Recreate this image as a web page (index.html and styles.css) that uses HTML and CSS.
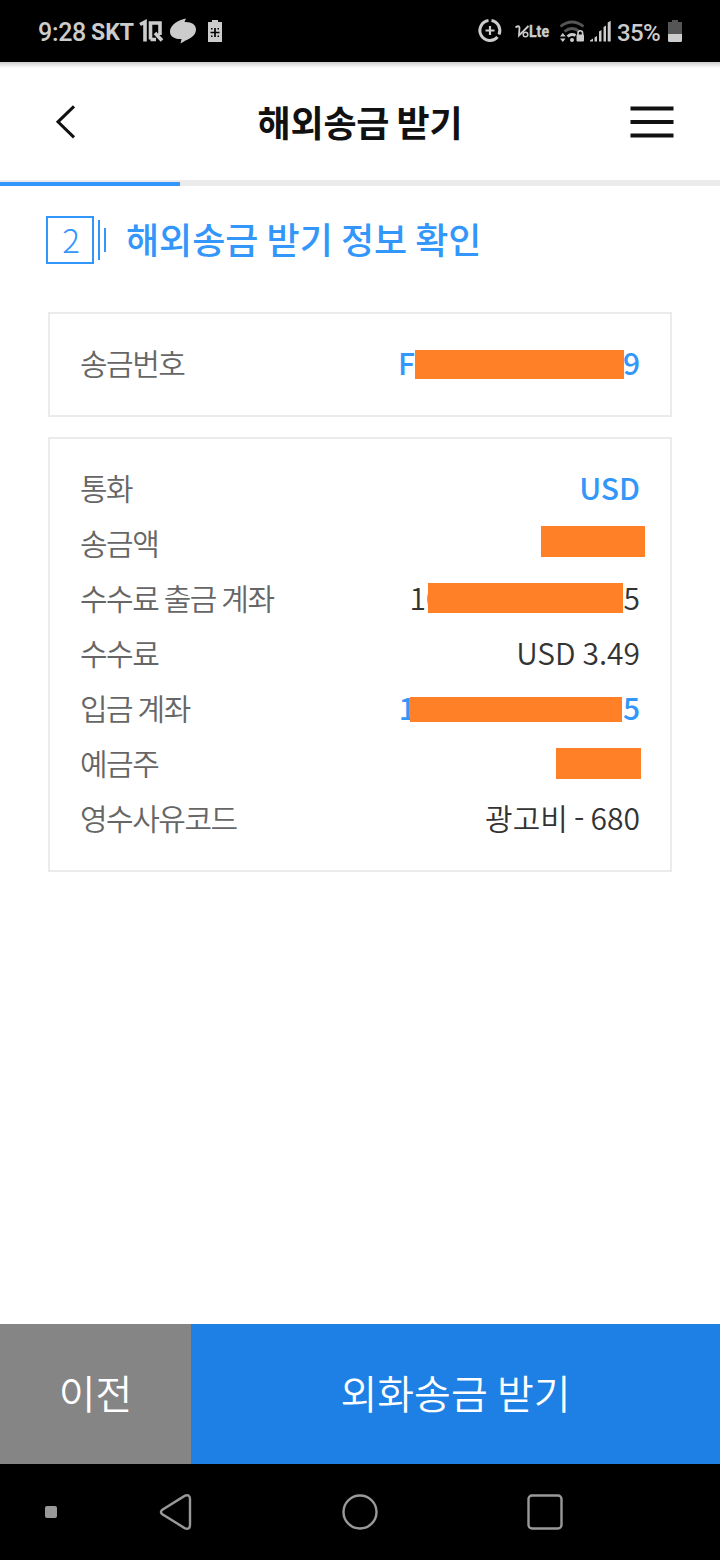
FILE: index.html
```html
<!DOCTYPE html>
<html lang="ko">
<head>
<meta charset="utf-8">
<title>해외송금 받기</title>
<link rel="stylesheet" href="styles.css">
</head>
<body>
<div class="screen">
  <div class="status">
    <span class="clock">9:28</span>
    <span class="carrier">SKT</span>
    <svg class="st-left" width="90" height="62" viewBox="138 0 90 62">
      <path d="M140 24.500L145 22V41.500M150.500 39.500V23H160V35M150.500 39.500H156M155 33L162 40.500" fill="none" stroke="#ccc" stroke-width="3.600"/>
      <path d="M186 18.500L184.500 22C191 21.500 196.500 24.500 196 30C195.500 35.500 190.500 38.500 185.500 40.500L180.500 43.500L181.500 39C175 39.500 169.500 36.500 170 31C170.500 25 178 20 186 18.500Z" fill="#ccc"/>
      <path d="M208 22h4v-2h6v2h4v20h-14z" fill="#ccc"/>
      <path d="M215 28v9M210.500 32.500h9" stroke="#000" stroke-width="1.700"/>
      <path d="M211 28h1.500v1.500H211zM217.500 28h1.500v1.500h-1.500zM211 35.500h1.500V37H211zM217.500 35.500h1.500V37h-1.500z" fill="#000"/>
    </svg>
    <svg class="st-right" width="136" height="62" viewBox="476 0 136 62">
      <g fill="none" stroke="#ccc" stroke-width="3">
        <path d="M491.500 20.600A10 10 0 0 1 499 34.500M497.500 37A10 10 0 1 1 488.500 20.600"/>
        <path d="M490 26v9M485.500 30.500h9" stroke-width="2.200"/>
      </g>
      <path d="M515.500 27.500q3.500-2.500 4 0l-.5 8L528.500 26" fill="none" stroke="#ccc" stroke-width="1.800"/>
      <circle cx="525.500" cy="34.500" r="2.300" fill="none" stroke="#ccc" stroke-width="1.500"/>
      <text class="volte" x="529" y="37" textLength="20" lengthAdjust="spacingAndGlyphs">Lte</text>
      <g fill="none" stroke-width="2.800">
        <path d="M560.500 26.500Q572 17.500 583.500 26.500" stroke="#555"/>
        <path d="M564.500 31.500Q572 25.500 579.500 31.500" stroke="#555"/>
        <path d="M567.500 36.500Q571.500 33 575.500 35.500" stroke="#ccc"/>
      </g>
      <circle cx="572" cy="40" r="2" fill="#ccc"/>
      <path d="M560 36.500l2.800-3.500L565.600 36.500zM560 38.500h5.600L562.800 42z" fill="#ccc"/>
      <rect x="576.500" y="34.500" width="7.500" height="7" rx="1" fill="#ccc"/>
      <path d="M578 35.500v-2.500a2.300 2.300 0 0 1 4.600 0v2.500" fill="none" stroke="#ccc" stroke-width="1.600"/>
      <path d="M590 41.500v-1l3-2v3zM594.500 37.500l2.500-1.500v5.500h-2.500zM599 31.500l2.500-1.500v11.500H599zM603.500 27l2.500-1.500v16h-2.500zM607.700 22.500l3-1.700v20.700h-3z" fill="#ccc"/>
    </svg>
    <span class="pct">35%</span>
    <svg class="batt" width="14" height="62" viewBox="668 0 14 62">
      <path d="M668 22h4v-2h6v2h4v12h-14z" fill="#555"/>
      <path d="M668 34h14v6.500q0 1.500-1.500 1.500h-11q-1.500 0-1.500-1.500z" fill="#ccc"/>
    </svg>
  </div>

  <header class="header">
    <svg width="22" height="36" viewBox="0 0 22 36"><path d="M19 2.300L3 17.800L19 33.300" fill="none" stroke="#111" stroke-width="3"/></svg>
    <h1>해외송금 받기</h1>
    <svg width="44" height="34" viewBox="0 0 44 34"><path d="M.5 3.500h43M.5 17h43M.5 30.500h43" stroke="#111" stroke-width="3.800"/></svg>
  </header>
  <div class="progress"><div class="done"></div></div>

  <main>
    <div class="step">
      <span class="num">2</span><i class="bar tall"></i><i class="bar"></i>
      <h2>해외송금 받기 정보 확인</h2>
    </div>
    <section class="card">
      <div class="row"><span>송금번호</span><b>F<i class="mask m-no"></i>9</b></div>
    </section>
    <section class="card">
      <div class="row"><span>통화</span><b>USD</b></div>
      <div class="row"><span>송금액</span><i class="mask m-amt"></i></div>
      <div class="row"><span>수수료 출금 계좌</span><em>10<i class="mask m-fee"></i>5</em></div>
      <div class="row"><span>수수료</span><em>USD 3.49</em></div>
      <div class="row"><span>입금 계좌</span><b>1<i class="mask m-acc"></i>5</b></div>
      <div class="row"><span>예금주</span><i class="mask m-own"></i></div>
      <div class="row"><span>영수사유코드</span><em class="code">광고비 - 680</em></div>
    </section>
  </main>

  <footer class="actions"><button class="prev">이전</button><button class="next">외화송금 받기</button></footer>
  <nav class="nav">
    <i class="dot"></i>
    <svg class="back" width="34" height="38" viewBox="0 0 34 38"><path d="M3 17Q1 19 3 21L26 35.300Q31 37 31 32V6Q31 1 26 2.700Z" fill="none" stroke="#999" stroke-width="2.400"/></svg>
    <svg class="home" width="38" height="38" viewBox="0 0 38 38"><circle cx="19" cy="19" r="16.500" fill="none" stroke="#999" stroke-width="2.400"/></svg>
    <svg class="recent" width="38" height="38" viewBox="0 0 38 38"><rect x="2.500" y="2.500" width="33" height="33" rx="3.500" fill="none" stroke="#999" stroke-width="2.400"/></svg>
  </nav>
</div>
</body>
</html>
```
FILE: styles.css
```css
* { box-sizing: border-box; }
body { margin: 0; font-family: "Noto Sans CJK KR", sans-serif; background: #fff; }
h1, h2 { margin: 0; font-size: 36px; line-height: 48px; white-space: nowrap; }
i, em { font-style: normal; }
svg { display: block; flex: none; }
.screen { width: 720px; height: 1560px; display: flex; flex-direction: column; overflow: hidden; }

.status { height: 62px; flex: none; background: #000; color: #ccc; display: flex; align-items: center; padding-left: 38px; font-family: Roboto, sans-serif; line-height: 62px; white-space: nowrap; }
.clock { width: 53px; font-size: 25px; font-weight: 500; letter-spacing: -.3px; padding-top: 3px; }
.carrier { width: 47px; font-size: 23px; font-weight: 700; padding-top: 3px; }
.st-right { margin-left: 248px; }
.pct { width: 51px; margin-left: 5px; font-size: 24px; font-weight: 500; letter-spacing: -.6px; padding-top: 3px; }
.volte { font: 700 17px Roboto, sans-serif; fill: #ccc; stroke: #ccc; stroke-width: .4px; }

.header { height: 118px; flex: none; display: flex; align-items: center; justify-content: space-between; padding: 2px 46px 0 55px; background: linear-gradient(#ccc, #fff 6px); }
.header h1 { color: #111; font-weight: 700; word-spacing: -2.5px; margin: -3px 0 0 13px; letter-spacing: -.2px; }
.progress { height: 6px; flex: none; background: #ebebeb; padding-top: 2px; }
.done { width: 25%; height: 4px; background: #3296fa; }

main { flex: 1; padding: 30px 48px 0; }
.step { display: flex; align-items: center; height: 48px; margin: 0 0 48px -2px; color: #3296fa; }
.num { width: 48px; height: 48px; border: 2px solid; font-size: 33px; font-weight: 300; line-height: 42px; text-align: center; padding-left: 2px; }
.bar { width: 2px; height: 24px; margin-left: 4px; background: #3296fa; }
.bar.tall { height: 40px; }
.step h2 { margin: -5px 0 0 20px; font-weight: 500; word-spacing: -2px; }

.card { border: 2px solid #ebebeb; padding: 22px 30px 24px; margin-bottom: 20px; }
.row { height: 55px; display: flex; align-items: center; justify-content: space-between; font-size: 30px; line-height: 53px; white-space: nowrap; }
.row span { color: #666; font-weight: 350; letter-spacing: -1.5px; word-spacing: -1.5px; margin-top: -2px; }
.row b, .row em { display: flex; align-items: center; margin-top: -2px; }
.row b { color: #3296fa; font-weight: 500; }
.row em { color: #333; font-weight: 350; word-spacing: -1.5px; }
.row .code { word-spacing: -2.2px; }
.mask { display: block; flex: none; background: #ff8027; z-index: 1; }
.m-no { width: 209px; height: 29px; margin: 3px -1px 0 0; }
.m-amt { width: 104px; height: 31px; margin: 0 -5px 5px 0; }
.m-fee { width: 195px; height: 30px; margin-left: -15px; margin-right: 1px; }
.m-acc { width: 212px; height: 25px; margin: 4px 1px 0 -6px; }
.m-own { width: 85px; height: 31px; margin-right: -1px; }

.actions { height: 140px; flex: none; display: flex; }
.actions button { border: 0; padding: 0 0 4px; color: #fff; font: 350 40px/136px "Noto Sans CJK KR", sans-serif; word-spacing: -2px; }
.prev { width: 191px; background: #858585; }
.next { flex: 1; background: #1e80e4; }
.nav { height: 96px; flex: none; background: #000; display: flex; align-items: center; padding-left: 45px; }
.dot { width: 12px; height: 12px; border-radius: 2px; background: #999; }
.back { margin-left: 102px; }
.home { margin-left: 147.500px; }
.recent { margin-left: 147px; }
```
